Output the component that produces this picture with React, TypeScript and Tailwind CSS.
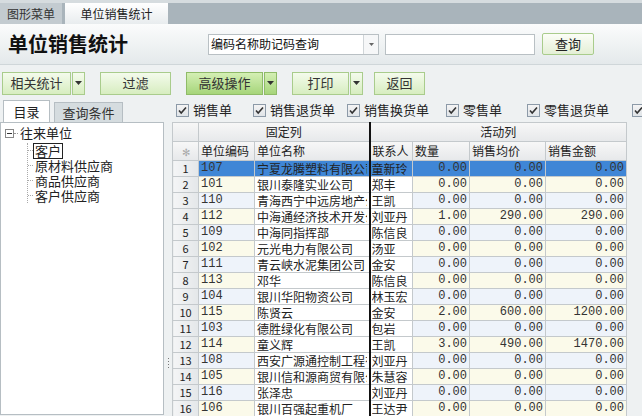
import React from "react";

const rows = [
  ["107", "宁夏龙腾塑料有限公司", "童新玲", "0.00", "0.00", "0.00"],
  ["101", "银川泰隆实业公司", "郑丰", "0.00", "0.00", "0.00"],
  ["110", "青海西宁中远房地产公司", "王凯", "0.00", "0.00", "0.00"],
  ["112", "中海通经济技术开发公司", "刘亚丹", "1.00", "290.00", "290.00"],
  ["109", "中海同指挥部", "陈信良", "0.00", "0.00", "0.00"],
  ["102", "元光电力有限公司", "汤亚", "0.00", "0.00", "0.00"],
  ["111", "青云峡水泥集团公司", "金安", "0.00", "0.00", "0.00"],
  ["113", "邓华", "陈信良", "0.00", "0.00", "0.00"],
  ["104", "银川华阳物资公司", "林玉宏", "0.00", "0.00", "0.00"],
  ["115", "陈贤云", "金安", "2.00", "600.00", "1200.00"],
  ["103", "德胜绿化有限公司", "包岩", "0.00", "0.00", "0.00"],
  ["114", "童义辉", "王凯", "3.00", "490.00", "1470.00"],
  ["108", "西安广源通控制工程有限公司", "刘亚丹", "0.00", "0.00", "0.00"],
  ["105", "银川信和源商贸有限公司", "朱慧容", "0.00", "0.00", "0.00"],
  ["116", "张泽忠", "刘亚丹", "0.00", "0.00", "0.00"],
  ["106", "银川百强起重机厂", "王达尹", "0.00", "0.00", "0.00"],
];

function Caret() {
  return (
    <svg width="7" height="4" viewBox="0 0 7 4">
      <path d="M0 0h7L3.5 4z" fill="#333" />
    </svg>
  );
}

function GreenButton({ label, w, dark, drop }: { label: string; w: string; dark?: boolean; drop?: boolean }) {
  const bg = dark
    ? "bg-gradient-to-b from-[#d4efb4] to-[#a6d57a] border-[#8fbb68]"
    : "bg-gradient-to-b from-[#f4fbec] to-[#d7edc0] border-[#a9cc8c]";
  return (
    <div className="flex h-[23px]">
      <div className={`${w} ${bg} flex items-center justify-center border text-[13px] text-[#333]`}>{label}</div>
      {drop && (
        <div className={`${bg} ml-[1px] flex w-[13px] items-center justify-center border`}>
          <Caret />
        </div>
      )}
    </div>
  );
}

function Check({ label, w }: { label: string; w: string }) {
  return (
    <div className={`${w} flex shrink-0 items-center gap-[4px] whitespace-nowrap text-[13px] text-[#222]`}>
      <div className="flex h-[13px] w-[13px] shrink-0 items-center justify-center border border-[#8c9aa8] bg-gradient-to-b from-[#f4f4f4] to-[#e0e4e8]">
        <svg width="9" height="9" viewBox="0 0 9 9">
          <path d="M1 4.5l2.2 2.5L8 1.5" stroke="#333" strokeWidth="1.6" fill="none" />
        </svg>
      </div>
      {label}
    </div>
  );
}

const cellB = "border border-[#c4c9cc]";
const mono = { fontFamily: '"Liberation Mono", "DejaVu Sans Mono", monospace' };

export default function App() {
  return (
    <div
      className="h-[416px] w-[642px] overflow-hidden bg-[#eef1f2] text-[#222]"
      style={{ fontFamily: '"Noto Sans CJK SC", "Liberation Sans", sans-serif' }}
    >
      {/* tab strip */}
      <div className="flex h-[24px] items-end border-t-[3px] border-[#d6dcdf] bg-[#a9b4bb]">
        <div className="flex h-[21px] w-[62px] items-center justify-center bg-[#c3cbd0] text-[12px] text-[#333]">图形菜单</div>
        <div className="ml-[3px] flex h-[21px] w-[103px] items-center justify-center bg-gradient-to-b from-white to-[#e8ecee] text-[12px] text-[#222]">
          单位销售统计
        </div>
      </div>

      {/* title row */}
      <div className="flex h-[41px] items-center border-b border-[#cfd6d9] bg-gradient-to-b from-[#fbfcfc] to-[#e4e9eb] pl-[8px]">
        <div className="w-[200px] text-[20px] font-bold text-[#111]">单位销售统计</div>
        <div className="flex h-[21px] w-[171px] items-center border border-[#b9c0c4] bg-white">
          <span className="flex-1 pl-[2px] text-[12px] text-[#111]">编码名称助记码查询</span>
          <div className="flex h-full w-[15px] items-center justify-center border-l border-[#d0d5d8] bg-[#f6f7f8]">
            <svg width="5" height="3" viewBox="0 0 5 3"><path d="M0 0h5L2.5 3z" fill="#666" /></svg>
          </div>
        </div>
        <div className="ml-[6px] h-[21px] w-[150px] border border-[#b9c0c4] bg-white" />
        <div className="ml-[7px] flex h-[22px] w-[52px] items-center justify-center rounded-[2px] border border-[#a9cc8c] bg-gradient-to-b from-[#fbfdf7] to-[#e4efd6] text-[13px]">
          查询
        </div>
      </div>

      {/* toolbar */}
      <div className="flex h-[33px] items-center gap-[15px] pl-[2px] pt-[3px]">
        <GreenButton label="相关统计" w="w-[69px]" drop />
        <GreenButton label="过滤" w="w-[71px]" />
        <GreenButton label="高级操作" w="w-[77px]" dark drop />
        <GreenButton label="打印" w="w-[57px]" drop />
        <div className="-ml-[4px]">
          <GreenButton label="返回" w="w-[51px]" />
        </div>
      </div>

      {/* tabs + checkboxes */}
      <div className="flex h-[24px] items-end">
        <div className="flex w-[171px] shrink-0 items-end pl-[3px]">
          <div className="flex h-[22px] w-[47px] items-center justify-center border border-b-0 border-[#b6bec3] bg-white text-[13px]">目录</div>
          <div className="ml-[4px] flex h-[20px] w-[69px] items-center justify-center border border-b-0 border-[#b6bec3] bg-[#d5dcdf] text-[13px] text-[#333]">
            查询条件
          </div>
        </div>
        <div className="flex h-full items-center pl-[5px]">
          <Check label="销售单" w="w-[77px]" />
          <Check label="销售退货单" w="w-[94px]" />
          <Check label="销售换货单" w="w-[99px]" />
          <Check label="零售单" w="w-[81px]" />
          <Check label="零售退货单" w="w-[105px]" />
          <Check label="" w="w-[20px]" />
        </div>
      </div>

      {/* body */}
      <div className="flex h-[293px]">
        <div className="w-[164px] shrink-0 border border-[#b6bec3] bg-white pl-[4px] pt-[2px] text-[13px]">
          <div className="flex h-[16px] items-center">
            <div className="flex h-[9px] w-[9px] items-center justify-center border border-[#888]">
              <div className="h-[1px] w-[5px] bg-[#333]" />
            </div>
            <div className="w-[4px] border-t border-dotted border-[#999]" />
            <span className="ml-[2px]">往来单位</span>
          </div>
          <div className="ml-[22px] mt-[2px] border-l border-dotted border-[#aaa] leading-[15px]">
            {["客户", "原材料供应商", "商品供应商", "客户供应商"].map((t, i) => (
              <div key={t} className="flex h-[15px] items-center">
                <div className="w-[5px] border-t border-dotted border-[#aaa]" />
                <span className={i === 0 ? "border border-[#222] px-[1px] leading-[14px]" : "px-[2px]"}>{t}</span>
              </div>
            ))}
          </div>
        </div>

        <div className="flex w-[8px] shrink-0 flex-col items-center justify-end pb-[47px]">
          <div className="flex flex-col gap-[2px]">
            {[0, 1, 2, 3].map((i) => (
              <div key={i} className="h-[1px] w-[1px] bg-[#777]" />
            ))}
          </div>
        </div>

        <div className="flex-1">
          <table className="table-fixed border-collapse text-[12px]" style={{ width: 454 }}>
            <colgroup>
              <col style={{ width: 26 }} />
              <col style={{ width: 56 }} />
              <col style={{ width: 115 }} />
              <col style={{ width: 43 }} />
              <col style={{ width: 57 }} />
              <col style={{ width: 76 }} />
              <col style={{ width: 81 }} />
            </colgroup>
            <thead>
              <tr className="h-[18px] bg-gradient-to-b from-[#f7f7f7] to-[#e6e8ea]">
                <th className={cellB} />
                <th colSpan={2} className={`${cellB} border-r-[2px] border-r-[#111] font-normal`}>固定列</th>
                <th colSpan={4} className={`${cellB} font-normal`}>活动列</th>
              </tr>
              <tr className="h-[19px] bg-gradient-to-b from-[#f7f7f7] to-[#e6e8ea] text-left">
                <th className={`${cellB} text-center text-[10px] font-normal text-[#aaa]`}>✻</th>
                <th className={`${cellB} pl-[2px] font-normal`}>单位编码</th>
                <th className={`${cellB} border-r-[2px] border-r-[#111] pl-[2px] font-normal`}>单位名称</th>
                <th className={`${cellB} pl-[2px] font-normal`}>联系人</th>
                <th className={`${cellB} pl-[2px] font-normal`}>数量</th>
                <th className={`${cellB} pl-[2px] font-normal`}>销售均价</th>
                <th className={`${cellB} pl-[2px] font-normal`}>销售金额</th>
              </tr>
            </thead>
            <tbody>
              {rows.map((r, i) => {
                const sel = i === 0;
                const bg = sel ? "bg-[#3f86d6]" : i % 2 === 1 ? "bg-[#fbfaea]" : "bg-[#eef3fa]";
                const nbg = sel ? bg : "bg-white";
                const num = "text-right pr-[2px] text-[12px] text-[#333]";
                return (
                  <tr key={i} className="h-[16px] leading-[15px]">
                    <td className={`${cellB} bg-gradient-to-r from-[#f4f5f6] to-[#e4e7e9] text-center text-[11px]`}>{i + 1}</td>
                    <td className={`${bg} ${cellB} pl-[2px] text-[12px] text-[#333]`} style={mono}>{r[0]}</td>
                    <td className={`${nbg} ${cellB} border-r-[2px] border-r-[#111] pl-[2px]`}>
                      <div className="h-[15px] w-[110px] overflow-hidden whitespace-nowrap">{r[1]}</div>
                    </td>
                    <td className={`${nbg} ${cellB} pl-[1px]`}>
                      <div className="h-[15px] w-[40px] overflow-hidden whitespace-nowrap">{r[2]}</div>
                    </td>
                    <td className={`${bg} ${num} ${cellB}`} style={mono}>{r[3]}</td>
                    <td className={`${bg} ${num} ${cellB}`} style={mono}>{r[4]}</td>
                    <td className={`${bg} ${num} ${cellB}`} style={mono}>{r[5]}</td>
                  </tr>
                );
              })}
            </tbody>
          </table>
        </div>
      </div>
    </div>
  );
}
